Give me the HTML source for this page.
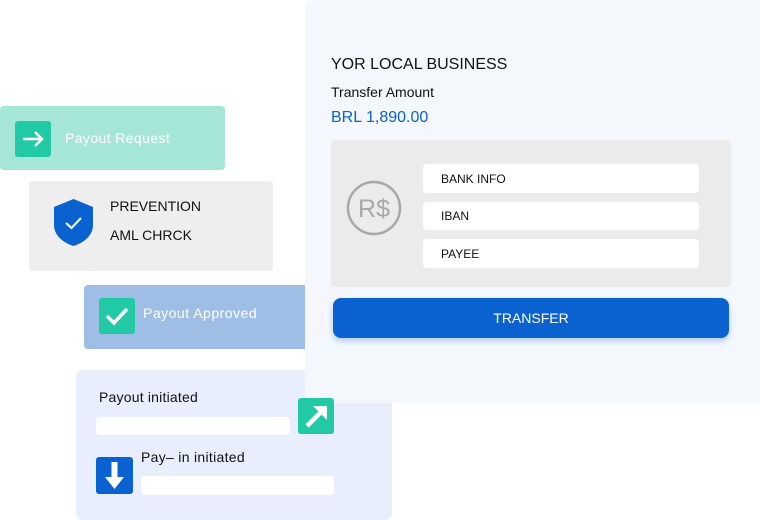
<!DOCTYPE html>
<html><head><style>
*{margin:0;padding:0;box-sizing:border-box}
body{width:760px;height:520px;background:#fff;position:relative;overflow:hidden;font-family:"Liberation Sans",sans-serif}
.a{position:absolute}
</style></head><body>
<div class="a" style="left:0;top:106px;width:225px;height:64px;background:#a6e6d9;border-radius:4px"></div>
<div class="a" style="left:15px;top:121px;width:36px;height:36px;background:#22c9a5;border-radius:3px">
<svg width="36" height="36"><path d="M8 18H27M20 11L27 18L20 25" stroke="#fff" stroke-width="2.5" fill="none"/></svg></div>
<div class="a" style="left:65px;top:130px;font-size:14px;color:#fff;letter-spacing:0.4px">Payout Request</div>

<div class="a" style="left:29px;top:181px;width:244px;height:90px;background:#eeeeee;border-radius:3px"></div>
<svg class="a" style="left:53px;top:198px" width="41" height="49"><path d="M20.5 1L40 9V27C40 38 30 45 20.5 48C11 45 1 38 1 27V9Z" fill="#0a62d0"/><path d="M13 25L18.5 30L28 20" stroke="#fff" stroke-width="2" fill="none"/></svg>
<div class="a" style="left:110px;top:198px;font-size:14px;color:#111">PREVENTION</div>
<div class="a" style="left:110px;top:227px;font-size:14px;color:#111">AML CHRCK</div>

<div class="a" style="left:84px;top:285px;width:230px;height:64px;background:#9ebee5;border-radius:4px"></div>
<div class="a" style="left:99px;top:298px;width:36px;height:36px;background:#22c9a5;border-radius:3px">
<svg width="36" height="36"><path d="M8 18L15 25L28 11" stroke="#fff" stroke-width="3.5" fill="none"/></svg></div>
<div class="a" style="left:143px;top:305px;font-size:14px;color:#fff;letter-spacing:0.5px">Payout Approved</div>

<div class="a" style="left:76px;top:370px;width:316px;height:150px;background:#e8eefc;border-radius:7px"></div>
<div class="a" style="left:99px;top:389px;font-size:14px;color:#111;letter-spacing:0.2px">Payout initiated</div>
<div class="a" style="left:96px;top:417px;width:194px;height:18px;background:#fff;border-radius:4px"></div>
<div class="a" style="left:141px;top:449px;font-size:14px;color:#111;letter-spacing:0.3px">Pay– in initiated</div>
<div class="a" style="left:141px;top:476px;width:193px;height:19px;background:#fff;border-radius:4px"></div>
<div class="a" style="left:96px;top:457px;width:37px;height:37px;background:#0a62d0;border-radius:3px">
<svg width="37" height="37"><path d="M15.5 5H21.5V20H28L18.5 32L9 20H15.5Z" fill="#fff"/></svg></div>

<div class="a" style="left:305px;top:0;width:460px;height:403px;background:#f4f7fc;border-radius:6px"></div>
<div class="a" style="left:298px;top:398px;width:36px;height:36px;background:#22c9a5;border-radius:3px">
<svg width="36" height="36"><path d="M9 28L24 13" stroke="#fff" stroke-width="4.5"/><path d="M15 8H29V22Z" fill="#fff"/></svg></div>

<div class="a" style="left:331px;top:56px;font-size:16px;color:#111">YOR LOCAL BUSINESS</div>
<div class="a" style="left:331px;top:84px;font-size:14px;color:#111">Transfer Amount</div>
<div class="a" style="left:331px;top:109px;font-size:16px;color:#0a62d0">BRL 1,890.00</div>
<div class="a" style="left:331px;top:140px;width:400px;height:147px;background:#ebebeb;border-radius:4px"></div>
<svg class="a" style="left:346px;top:180px" width="56" height="56"><circle cx="28" cy="28" r="26" stroke="#a8a8a8" stroke-width="2.5" fill="none"/><text x="28" y="37" text-anchor="middle" font-family="Liberation Sans" font-size="25" fill="#a8a8a8">R$</text></svg>
<div class="a" style="left:423px;top:164px;width:276px;height:29px;background:#fff;border-radius:4px;font-size:12px;padding:8px 0 0 18px;color:#111">BANK INFO</div>
<div class="a" style="left:423px;top:202px;width:276px;height:28px;background:#fff;border-radius:4px;font-size:12px;padding:7px 0 0 18px;color:#111">IBAN</div>
<div class="a" style="left:423px;top:239px;width:276px;height:29px;background:#fff;border-radius:4px;font-size:12px;padding:8px 0 0 18px;color:#111">PAYEE</div>
<div class="a" style="left:333px;top:298px;width:396px;height:40px;background:#0a62d0;border-radius:8px;box-shadow:0 3px 6px rgba(10,98,208,.3);color:#fff;font-size:14px;text-align:center;line-height:40px">TRANSFER</div>
</body></html>
